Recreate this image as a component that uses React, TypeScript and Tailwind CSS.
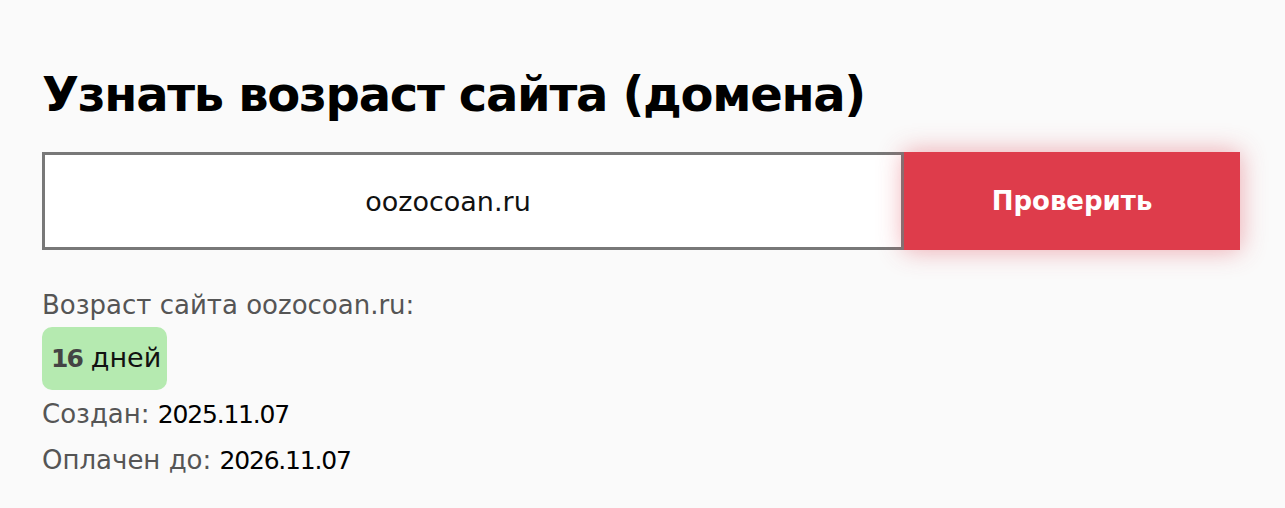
import React, { useState } from 'react';

const App: React.FC = () => {
  const [domain, setDomain] = useState('oozocoan.ru');

  return (
    <div className="min-h-[508px] w-full bg-[#fafafa] px-[42px] pt-[60px] font-['DejaVu_Sans',sans-serif] text-black">
      <h1 className="text-[48px] font-bold leading-[68px] tracking-[-1.3px]">Узнать возраст сайта (домена)</h1>

      {/* Search form */}
      <div className="mt-[24px] flex h-[98px] w-[1198px]">
        <input
          value={domain}
          onChange={(e) => setDomain(e.target.value)}
          className="h-full flex-1 border-[3px] border-[#787878] bg-white pr-[50px] text-center text-[27px] text-[#111] outline-none"
        />
        <button className="h-full w-[336px] bg-[#de3c4b] text-[26px] font-bold text-white shadow-[0_0_24px_rgba(222,60,75,0.45)]">
          Проверить
        </button>
      </div>

      {/* Result */}
      <div className="mt-[39px] text-[26px] text-[#555]">
        <div className="leading-[32px]">Возраст сайта oozocoan.ru:</div>
        <div className="mt-[6px] inline-flex h-[63px] items-center rounded-[10px] bg-[#b5eab0] pl-[9px] pr-[6px]">
          <span className="text-[25px] font-bold tracking-[-2px] text-[#444]">16</span>
          <span className="ml-[9px] text-[27px] text-[#111]">дней</span>
        </div>
        <div className="mt-[4px] leading-[40px]">
          Создан: <span className="text-[25px] tracking-[-1.2px] text-black">2025.11.07</span>
        </div>
        <div className="mt-[4px] leading-[42px]">
          Оплачен до: <span className="text-[25px] tracking-[-1.2px] text-black">2026.11.07</span>
        </div>
      </div>
    </div>
  );
};

export default App;
